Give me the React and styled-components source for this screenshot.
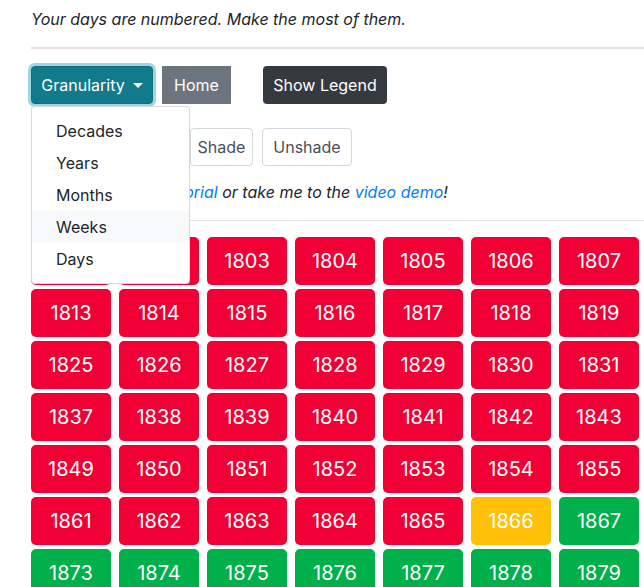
import React from 'react';
import styled, { createGlobalStyle, css } from 'styled-components';

const GlobalStyle = createGlobalStyle`
  body {
    margin: 0;
    overflow: hidden;
    font-family: Inter, "Liberation Sans", sans-serif;
    color: #212529;
    background: #fff;
  }
`;

const BIRTH = 1801;
const NOW = 1866;

const Page = styled.div`
  width: 1100px;
  padding: 7px 0 0 31px;
`;

const Tagline = styled.p`
  margin: 0 0 16px;
  font-size: 16px;
  line-height: 24px;
  font-style: italic;
`;

const Rule = styled.hr`
  margin: 0 0 ${(p) => p.$after || 16}px;
  border: 0;
  border-top: ${(p) => p.$thick || 1}px solid #e4e4e4;
`;

const Toolbar = styled.div`
  display: flex;
  align-items: center;
  gap: 9px;
  margin-bottom: ${(p) => p.$after || 0}px;
`;

const Button = styled.button`
  box-sizing: border-box;
  height: 38px;
  width: ${(p) => p.$w}px;
  padding: 0;
  font-family: inherit;
  font-size: 16px;
  line-height: 24px;
  border-radius: 4px;
  border: 1px solid transparent;
  cursor: pointer;
  ${(p) =>
    p.$variant === 'info' &&
    css`
      background: #117a8b;
      border-color: #10707f;
      color: #fff;
      box-shadow: 0 0 0 3px rgba(58, 176, 195, 0.5);
    `}
  ${(p) =>
    p.$variant === 'secondary' &&
    css`
      background: #6c757d;
      color: #fff;
      border-radius: 0;
    `}
  ${(p) =>
    p.$variant === 'dark' &&
    css`
      background: #343a40;
      color: #fff;
      margin-left: 23px;
    `}
  ${(p) =>
    p.$variant === 'outline' &&
    css`
      background: #fff;
      color: #495057;
      border-color: #d3d8dd;
    `}
`;

const Caret = styled.span`
  display: inline-block;
  margin-left: 8px;
  vertical-align: 3px;
  border-top: 5px solid #fff;
  border-left: 5px solid transparent;
  border-right: 5px solid transparent;
`;

const Dropdown = styled.div`
  position: relative;
`;

const Menu = styled.div`
  position: absolute;
  top: 40px;
  left: 0;
  z-index: 10;
  box-sizing: border-box;
  width: 159px;
  padding: 8px 0;
  background: #fff;
  border: 1px solid rgba(0, 0, 0, 0.15);
  border-radius: 4px;
`;

const MenuItem = styled.div`
  padding: 4px 24px;
  font-size: 16px;
  line-height: 24px;
  color: #212529;
  background: ${(p) => (p.$active ? '#f8f9fa' : 'transparent')};
`;

const Note = styled.p`
  margin: 0 0 16px;
  font-size: 16px;
  line-height: 24px;
  font-style: italic;
`;

const Link = styled.a`
  color: #007bff;
  text-decoration: none;
`;

const Grid = styled.div`
  display: grid;
  grid-template-columns: repeat(12, 80px);
  column-gap: 8px;
  row-gap: 4px;
`;

const Cell = styled.div`
  height: 48px;
  border-radius: 5px;
  display: flex;
  align-items: center;
  justify-content: center;
  color: #fff;
  font-size: 20px;
  background: ${(p) =>
    p.$state === 'past' ? '#f00034' : p.$state === 'now' ? '#ffc107' : '#00b04a'};
`;

const granularities = ['Decades', 'Years', 'Months', 'Weeks', 'Days'];

export default function App() {
  const years = [];
  for (let y = BIRTH; y < BIRTH + 96; y++) years.push(y);

  return (
    <>
      <GlobalStyle />
      <Page>
        <Tagline>Your days are numbered. Make the most of them.</Tagline>
        <Rule $thick={2} $after={17} />
        <Toolbar $after={24}>
          <Dropdown>
            <Button $variant="info" $w={122}>
              Granularity
              <Caret />
            </Button>
            <Menu>
              {granularities.map((g) => (
                <MenuItem key={g} $active={g === 'Weeks'}>
                  {g}
                </MenuItem>
              ))}
            </Menu>
          </Dropdown>
          <Button $variant="secondary" $w={69}>
            Home
          </Button>
          <Button $variant="dark" $w={124}>
            Show Legend
          </Button>
        </Toolbar>
        <Toolbar $after={14}>
          <Button $variant="outline" $w={72}>
            Select
          </Button>
          <Button $variant="outline" $w={69}>
            Clear
          </Button>
          <Button $variant="outline" $w={63}>
            Shade
          </Button>
          <Button $variant="outline" $w={90}>
            Unshade
          </Button>
        </Toolbar>
        <Note>
          Please give me a <Link href="#">tutorial</Link> or take me to the{' '}
          <Link href="#">video demo</Link>!
        </Note>
        <Rule $after={16} />
        <Grid>
          {years.map((y) => (
            <Cell key={y} $state={y < NOW ? 'past' : y === NOW ? 'now' : 'future'}>
              {y}
            </Cell>
          ))}
        </Grid>
      </Page>
    </>
  );
}
